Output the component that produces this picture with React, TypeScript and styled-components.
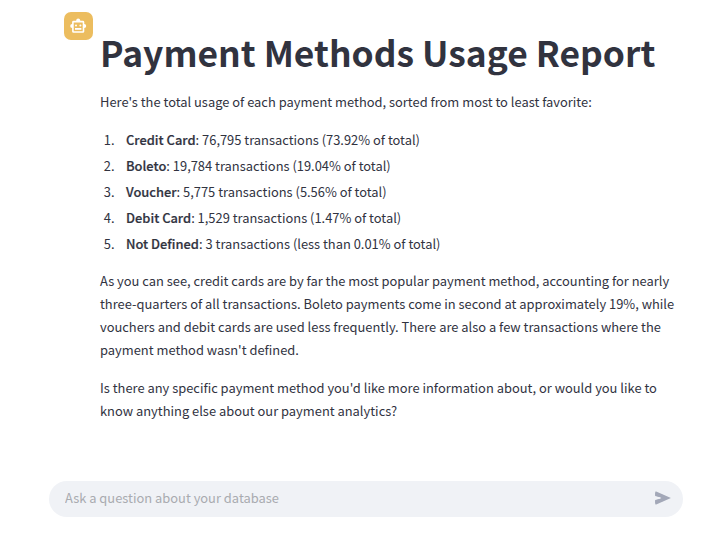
import React from "react";
import styled, { createGlobalStyle } from "styled-components";

const GlobalStyle = createGlobalStyle`
  body { margin: 0; background: #fff; }
  * { box-sizing: border-box; }
`;

const Page = styled.main`
  height: 533px;
  overflow: hidden;
  display: flex;
  flex-direction: column;
  justify-content: space-between;
  padding: 12px 40px 16px 49px;
  font-family: "Noto Sans CJK SC", "Noto Sans", sans-serif;
  font-size: 12.9px;
  color: #31333f;
`;

const Message = styled.article`
  display: flex;
  gap: 7px;
  padding-left: 15px;
`;

const Avatar = styled.div`
  flex: none;
  width: 29px;
  height: 28px;
  border-radius: 7px;
  background: #ecbd5f;
  color: #fff;
  display: grid;
  place-items: center;
`;

const Content = styled.div`
  flex: 1;
  min-width: 0;
`;

const Title = styled.h1`
  margin: 16px 0 15px;
  font-size: 35.4px;
  line-height: 47px;
  font-weight: 700;
  white-space: nowrap;
`;

const Paragraph = styled.p`
  margin: 0 0 15px;
  line-height: 23px;
`;

const Line = styled.span`
  display: block;
  white-space: nowrap;
`;

const MethodList = styled.ol`
  margin: 0 0 14px;
  padding: 0;
  list-style: none;
`;

const MethodItem = styled.li`
  display: grid;
  grid-template-columns: 14.5px 1fr;
  column-gap: 11.5px;
  line-height: 23px;
  margin-bottom: 3px;
`;

const Position = styled.span`
  text-align: right;
`;

const MethodName = styled.strong`
  font-weight: 500;
  -webkit-text-stroke: 0.2px currentColor;
`;

const Composer = styled.form`
  display: flex;
  align-items: center;
  height: 36px;
  padding: 0 11px 0 16px;
  border-radius: 18px;
  background: #f0f2f6;
`;

const Prompt = styled.input`
  flex: 1;
  min-width: 0;
  padding: 0 0 3px;
  border: 0;
  outline: 0;
  background: transparent;
  font: inherit;
  color: inherit;
  &::placeholder {
    color: #a9abb0;
    opacity: 1;
  }
`;

const SendButton = styled.button`
  display: grid;
  place-items: center;
  padding: 0 0 2px;
  border: 0;
  background: none;
  color: #a3a8b8;
`;

const methods = [
  { name: "Credit Card", usage: "76,795 transactions (73.92% of total)" },
  { name: "Boleto", usage: "19,784 transactions (19.04% of total)" },
  { name: "Voucher", usage: "5,775 transactions (5.56% of total)" },
  { name: "Debit Card", usage: "1,529 transactions (1.47% of total)" },
  { name: "Not Defined", usage: "3 transactions (less than 0.01% of total)" },
];

const summary = [
  "As you can see, credit cards are by far the most popular payment method, accounting for nearly",
  "three-quarters of all transactions. Boleto payments come in second at approximately 19%, while",
  "vouchers and debit cards are used less frequently. There are also a few transactions where the",
  "payment method wasn't defined.",
];

const followUp = [
  "Is there any specific payment method you'd like more information about, or would you like to",
  "know anything else about our payment analytics?",
];

function RobotIcon() {
  return (
    <svg width="17" height="16" viewBox="0 0 17 16" fill="currentColor">
      <circle cx="8.2" cy="2.5" r="2" />
      <circle cx="2.2" cy="8" r="2" />
      <circle cx="14.2" cy="8" r="2" />
      <rect x="2.9" y="3.6" width="10.6" height="10.4" rx="0.6" fill="#ecbd5f" stroke="currentColor" strokeWidth="1.6" />
      <circle cx="6" cy="7.5" r="1" />
      <circle cx="10.4" cy="7.5" r="1" />
      <rect x="5" y="10" width="6.4" height="1.8" />
    </svg>
  );
}

function SendIcon() {
  return (
    <svg width="18" height="18" viewBox="0 0 18 18" fill="currentColor">
      <path d="M1.2 3.2 Q1.2 2.1 2.2 2.5 L16.9 9 L2.2 15.5 Q1.2 15.9 1.2 14.8 V11.4 L8.6 9 L1.2 6.6Z" />
      <path d="M1.2 4 V7 L7.2 8.4 V9.6 L1.2 11 V14 L9 12 V6Z" />
    </svg>
  );
}

export default function App() {
  return (
    <Page>
      <GlobalStyle />
      <Message>
        <Avatar>
          <RobotIcon />
        </Avatar>
        <Content>
          <Title>Payment Methods Usage Report</Title>
          <Paragraph>
            Here's the total usage of each payment method, sorted from most to least favorite:
          </Paragraph>
          <MethodList>
            {methods.map((method, index) => (
              <MethodItem key={method.name}>
                <Position>{index + 1}.</Position>
                <span>
                  <MethodName>{method.name}</MethodName>: {method.usage}
                </span>
              </MethodItem>
            ))}
          </MethodList>
          <Paragraph>
            {summary.map((line) => (
              <Line key={line}>{line}</Line>
            ))}
          </Paragraph>
          <Paragraph>
            {followUp.map((line) => (
              <Line key={line}>{line}</Line>
            ))}
          </Paragraph>
        </Content>
      </Message>
      <Composer>
        <Prompt placeholder="Ask a question about your database" />
        <SendButton type="button" aria-label="Send">
          <SendIcon />
        </SendButton>
      </Composer>
    </Page>
  );
}
